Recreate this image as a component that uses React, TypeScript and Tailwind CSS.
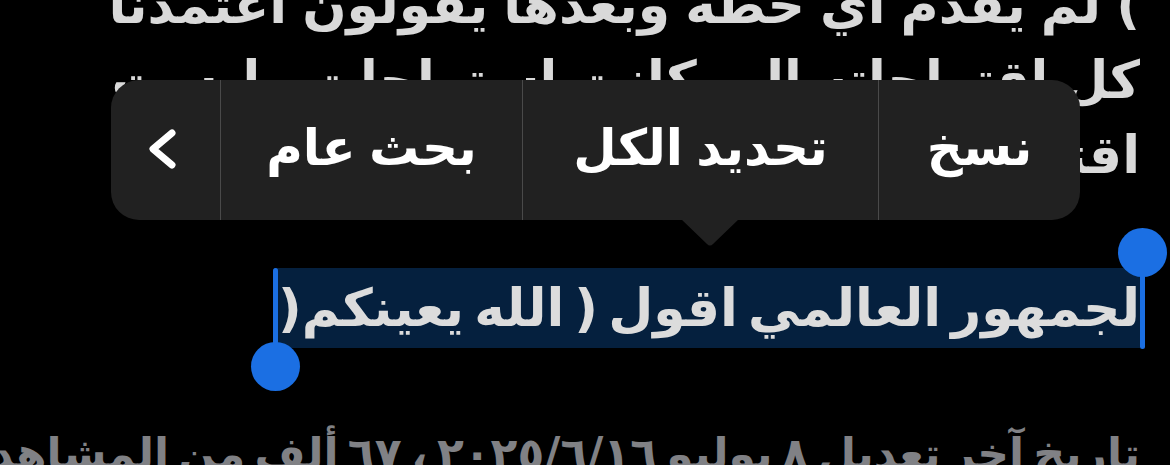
const font = { fontFamily: '"DejaVu Sans", "Noto Sans", sans-serif' };

// iOS text selection popup
function EditMenu() {
  return (
    <div className="absolute left-[111px] top-[80px]" dir="rtl">
      <div className="flex h-[140px] w-[969px] items-stretch overflow-hidden rounded-[28px] bg-[#212121] text-[50px] font-bold text-white [word-spacing:-4px]">
        <div className="flex w-[201px] items-center justify-center pb-[4px]">نسخ</div>
        <div className="w-px bg-[#4a4a4a]" />
        <div className="flex w-[355px] items-center justify-center pb-[4px]">تحديد الكل</div>
        <div className="w-px bg-[#4a4a4a]" />
        <div className="flex w-[301px] items-center justify-center pb-[4px]">بحث عام</div>
        <div className="w-px bg-[#4a4a4a]" />
        <div className="flex flex-1 items-center justify-center">
          <svg width="40" height="50" viewBox="0 0 40 50" className="-ml-[6px]">
            <path d="M29 8 L10 24 L29 40" fill="none" stroke="white" strokeWidth="7" strokeLinecap="round" strokeLinejoin="round" />
          </svg>
        </div>
      </div>
      <svg className="absolute left-[570px] top-[139px]" width="58" height="28" viewBox="0 0 58 28">
        <path d="M0 0 L58 0 L32 25 Q29 28 26 25 Z" fill="#212121" />
      </svg>
    </div>
  );
}

function Handle({ side }: { side: 'top' | 'bottom' }) {
  return side === 'top' ? (
    <div className="absolute -right-[27px] top-[-40px] flex flex-col items-center">
      <div className="h-[49px] w-[49px] rounded-full bg-[#1b6fe3]" />
      <div className="-mt-[8px] h-[80px] w-[5px] rounded-b-full bg-[#1b6fe3]" />
    </div>
  ) : (
    <div className="absolute -left-[23px] top-0 flex flex-col items-center">
      <div className="h-[86px] w-[5px] rounded-t-full bg-[#1b6fe3]" />
      <div className="-mt-[12px] h-[49px] w-[49px] rounded-full bg-[#1b6fe3]" />
    </div>
  );
}

export default function App() {
  return (
    <div className="relative h-[465px] w-[1170px] overflow-hidden bg-black" style={font}>
      <div dir="rtl" className="flex flex-col pr-[30px]">
        <div className="-mt-[32px] text-[52px] font-bold leading-[75px] whitespace-nowrap text-[#d9d9d9] [word-spacing:-3px]">
          <div>) لم يقدم اي خطة وبعدها يقولون اعتمدنا</div>
          <div>كل اقتراحاته الي كانت استراحات وليست</div>
          <div>اقتراحات</div>
          <div className="h-[75px]" />
        </div>
        <div className="flex">
          <span className="relative h-[80px] bg-[#05203e] pl-[4px] text-[52px] font-bold leading-[80px] whitespace-nowrap text-[#dcdcdc] [word-spacing:-8px]">
            لجمهور العالمي اقول ( الله يعينكم(
            <Handle side="top" />
            <Handle side="bottom" />
          </span>
        </div>
        <div className="mt-[76px] text-[44px] font-bold leading-[60px] whitespace-nowrap text-[#808185] [word-spacing:-6px]">
          تاريخ آخر تعديل ٨ يوليو ٢٠٢٥/٦/١٦ ، ٦٧ ألف من المشاهدات
        </div>
      </div>
      <EditMenu />
    </div>
  );
}
